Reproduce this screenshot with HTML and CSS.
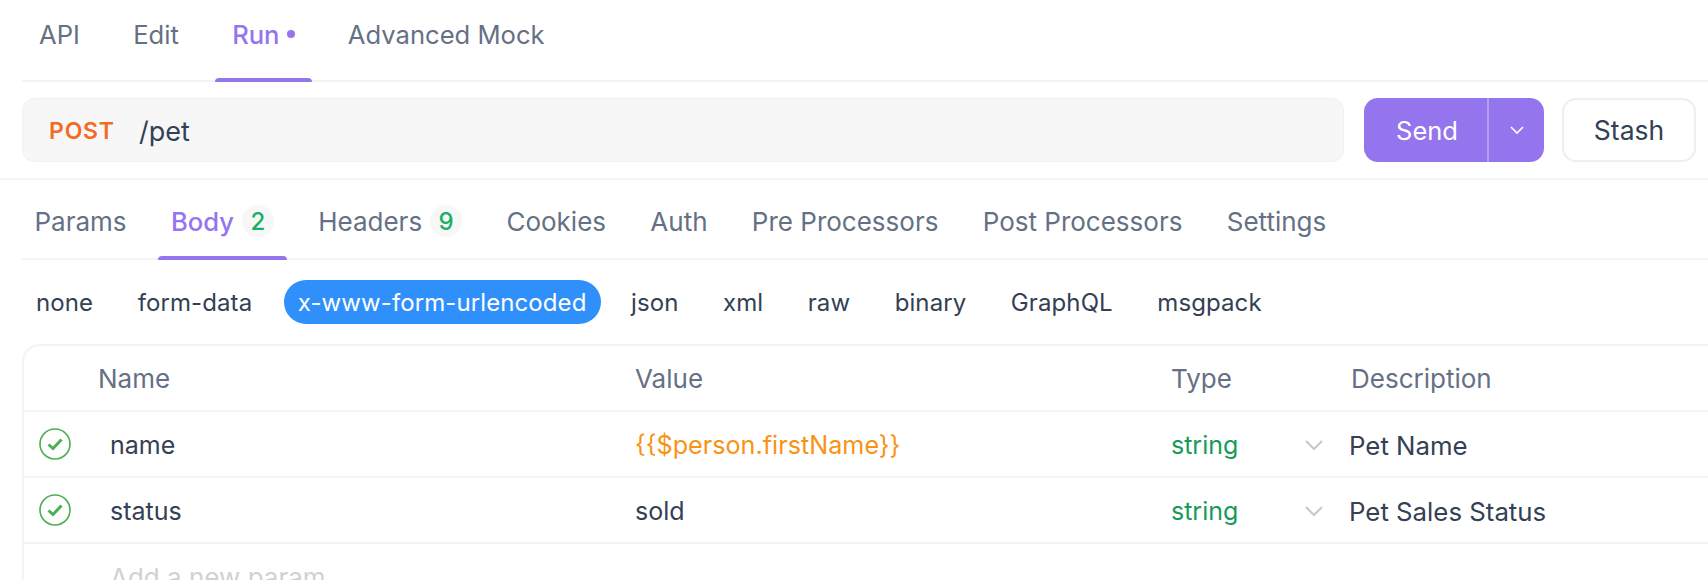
FILE: index.html
```html
<!DOCTYPE html>
<html lang="en">
<head>
<meta charset="utf-8">
<title>Run</title>
<link rel="stylesheet" href="styles.css">
</head>
<body>
<div class="page">
  <nav class="tabs tabs-top">
    <div class="tab">API</div>
    <div class="tab">Edit</div>
    <div class="tab active">Run<span class="dot"></span></div>
    <div class="tab">Advanced Mock</div>
  </nav>
  <div class="url-row">
    <div class="url-bar"><span class="method">POST</span><span class="path">/pet</span></div>
    <div class="send">
      <span class="send-label">Send</span>
      <span class="send-arrow"><svg width="16" height="16" viewBox="0 0 16 16"><path d="M2 5 8 11 14 5" fill="none" stroke="#fff" stroke-width="1.6"/></svg></span>
    </div>
    <div class="stash">Stash</div>
  </div>
  <nav class="tabs tabs-sub">
    <div class="tab sub">Params</div>
    <div class="tab sub active">Body<span class="badge">2</span></div>
    <div class="tab sub">Headers<span class="badge">9</span></div>
    <div class="tab sub">Cookies</div>
    <div class="tab sub">Auth</div>
    <div class="tab sub">Pre Processors</div>
    <div class="tab sub">Post Processors</div>
    <div class="tab sub">Settings</div>
  </nav>
  <div class="types">
    <span class="type">none</span>
    <span class="type">form-data</span>
    <span class="type selected">x-www-form-urlencoded</span>
    <span class="type">json</span>
    <span class="type">xml</span>
    <span class="type">raw</span>
    <span class="type">binary</span>
    <span class="type">GraphQL</span>
    <span class="type">msgpack</span>
  </div>
  <div class="table">
    <div class="row head">
      <div></div><div>Name</div><div>Value</div><div>Type</div><div>Description</div>
    </div>
    <div class="row data">
      <div class="check"><svg width="32" height="32" viewBox="0 0 32 32"><circle cx="16" cy="16" r="15" fill="none" stroke="#4caf50" stroke-width="1.6"/><path d="M9.5 16.5 14 20.5 22.5 11.5" fill="none" stroke="#4caf50" stroke-width="3"/></svg></div>
      <div class="name">name</div>
      <div class="var">{{$person.firstName}}</div>
      <div class="dtype"><span>string</span><svg width="18" height="18" viewBox="0 0 18 18"><path d="M1 5 9 13 17 5" fill="none" stroke="#c9c9c9" stroke-width="2.2"/></svg></div>
      <div class="desc">Pet Name</div>
    </div>
    <div class="row data">
      <div class="check"><svg width="32" height="32" viewBox="0 0 32 32"><circle cx="16" cy="16" r="15" fill="none" stroke="#4caf50" stroke-width="1.6"/><path d="M9.5 16.5 14 20.5 22.5 11.5" fill="none" stroke="#4caf50" stroke-width="3"/></svg></div>
      <div class="name">status</div>
      <div>sold</div>
      <div class="dtype"><span>string</span><svg width="18" height="18" viewBox="0 0 18 18"><path d="M1 5 9 13 17 5" fill="none" stroke="#c9c9c9" stroke-width="2.2"/></svg></div>
      <div class="desc">Pet Sales Status</div>
    </div>
    <div class="row last">
      <div></div>
      <div class="name placeholder">Add a new param</div>
    </div>
  </div>
</div>
</body>
</html>
```
FILE: styles.css
```css
* { box-sizing: border-box; }
html, body { margin: 0; height: 100%; overflow: hidden; background: #fff; }
body { font-family: Inter, "Noto Sans", sans-serif; font-size: 25px; color: #344054; }
.page { padding-left: 22px; width: 1708px; }

.tabs { display: flex; border-bottom: 2px solid #f3f3f8; }
.tabs-top { height: 82px; gap: 19.3px; margin-bottom: 16px; font-size: 25.6px; }
.tab { position: relative; display: flex; align-items: center; padding: 0 17px; color: #667085; height: 100%; }
.tabs-top .tab { padding-bottom: 11px; }
.tab.active { color: #9575ee; font-weight: 500; }
.tab.active::after { content: ""; position: absolute; left: 0; right: 0; bottom: -2px; height: 4px; background: #9575ee; border-radius: 4px 4px 0 0; }
.dot { width: 8px; height: 8px; border-radius: 50%; background: #9575ee; margin-left: 7px; margin-bottom: 2px; }

.url-row { display: flex; height: 64px; padding-right: 12px; }
.url-bar { flex: 0 0 1322px; display: flex; align-items: center; padding: 2px 0 0 26px; background: #f7f7f8; border: 1px solid #f1f1f5; border-radius: 12px; }
.method { color: #f46b22; font-weight: 600; font-size: 23px; letter-spacing: 0.8px; width: 90px; }
.path { color: #344054; font-size: 27px; }
.send { margin-left: 20px; width: 180px; display: flex; background: #9575ee; border-radius: 14px; color: #fff; font-size: 25.5px; }
.send-label { width: 125px; padding-left: 3px; display: flex; align-items: center; justify-content: center; border-right: 2px solid #b39cf3; }
.send-arrow { flex: 1; display: flex; align-items: center; justify-content: center; }
.stash { margin-left: 18px; width: 134px; display: flex; align-items: center; justify-content: center; border: 2px solid #eeeef3; border-radius: 14px; font-size: 26.5px; }

.tabs-sub { margin-left: -22px; padding-left: 21.5px; height: 82px; margin-top: 16px; border-top: 2px solid #f3f3f8; border-bottom: 0; position: relative; gap: 18.3px; font-size: 26px; }
.tabs-sub::after { content: ""; position: absolute; left: 22px; right: 0; bottom: 0; height: 2px; background: #f3f3f8; }
.tab.sub { padding: 2px 13px 0; }
.tab.sub.active { font-size: 25.6px; }
.tab.sub.active::after { bottom: 0; z-index: 1; }
.badge { width: 32px; height: 32px; border-radius: 50%; background: #f7f7f8; color: #19b066; font-size: 24px; font-weight: 500; display: flex; align-items: center; justify-content: center; margin-left: 8px; }

.types { display: flex; align-items: center; gap: 16.5px; height: 84px; font-size: 24px; letter-spacing: 0.1px; }
.type { padding: 0 14px; height: 44px; display: flex; align-items: center; border-radius: 22px; }
.selected { background: #2f90fb; color: #fff; margin-left: 1px; }

.table { border: 2px solid #f3f3f8; border-right: 0; border-bottom: 0; border-radius: 18px 0 0 0; }
.row { display: grid; grid-template-columns: 74px 537px 536px 180px 1fr; height: 66px; align-items: center; border-bottom: 2px solid #f3f3f8; }
.row.data > :not(.check) { padding-top: 2px; }
.row.last { border-bottom: 0; }
.head { color: #667085; font-size: 26px; }
.check { display: flex; justify-content: center; padding-left: 12px; padding-right: 24px; }
.name { padding-left: 12px; }
.var { color: #f99314; font-size: 25.2px; }
.dtype { color: #1a9a5a; display: flex; align-items: center; justify-content: space-between; padding-right: 28px; }
.desc { margin-left: -2px; font-size: 25.8px; }
.placeholder { color: #cfd1d6; grid-column: 2; white-space: nowrap; font-size: 26px; }
```
